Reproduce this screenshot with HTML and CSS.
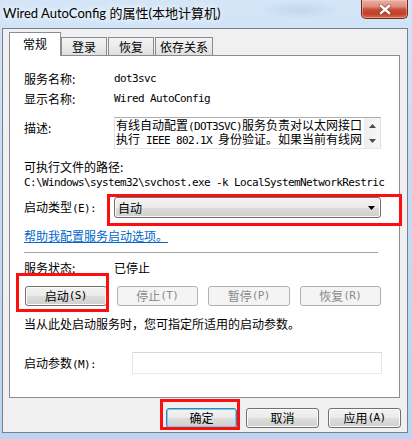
FILE: index.html
```html
<!DOCTYPE html>
<html lang="zh-CN">
<head>
<meta charset="utf-8">
<title>Wired AutoConfig 的属性(本地计算机)</title>
<link rel="stylesheet" href="styles.css">
</head>
<body>
<div class="window">
  <div class="titlebar">
    <span class="title">Wired AutoConfig 的属性(本地计算机)</span>
    <div class="close">
      <svg width="14" height="11" viewBox="0 0 14 11">
        <path d="M3 2 L11 9 M11 2 L3 9" stroke="#5b2a22" stroke-width="4.2" stroke-linecap="round" fill="none" opacity="0.5"/>
        <path d="M3 2 L11 9 M11 2 L3 9" stroke="#ffffff" stroke-width="2.4" stroke-linecap="square" fill="none"/>
      </svg>
    </div>
  </div>
  <div class="client">
    <div class="tabs">
      <div class="tab active">常规</div>
      <div class="tab w46">登录</div>
      <div class="tab w46">恢复</div>
      <div class="tab w58">依存关系</div>
    </div>
    <div class="panel">
      <div class="row r-name"><span class="label">服务名称:</span><span class="mono">dot3svc</span></div>
      <div class="row r-display"><span class="label">显示名称:</span><span class="mono">Wired AutoConfig</span></div>
      <div class="row r-desc">
        <span class="label pad">描述:</span>
        <div class="textbox">
          <div class="tb-text"><div class="tb-line">有线自动配置<span class="mono">(DOT3SVC)</span>服务负责对以太网接口</div><div class="tb-line">执行<span class="mono"> IEEE 802.1X </span>身份验证。如果当前有线网</div></div>
          <div class="vscroll">
            <svg width="7" height="4" viewBox="0 0 7 4"><path d="M3.5 0 L7 4 L0 4 Z" fill="#4a4a4a"/></svg>
            <svg width="7" height="4" viewBox="0 0 7 4"><path d="M0 0 L7 0 L3.5 4 Z" fill="#4a4a4a"/></svg>
          </div>
        </div>
      </div>
      <div class="line r-pathlabel">可执行文件的路径:</div>
      <div class="line r-path mono">C:\Windows\system32\svchost.exe -k LocalSystemNetworkRestric</div>
      <div class="row r-type">
        <span class="label">启动类型<span class="mono">(E):</span></span>
        <div class="annot combo-annot">
          <div class="combo"><span>自动</span>
            <svg width="7" height="4" viewBox="0 0 7 4"><path d="M0 0 L7 0 L3.5 4 Z" fill="#000"/></svg>
          </div>
        </div>
      </div>
      <a class="link" href="#">帮助我配置服务启动选项。</a>
      <div class="sep"></div>
      <div class="row r-status"><span class="label">服务状态:</span><span>已停止</span></div>
      <div class="svc-buttons">
        <div class="annot start-annot"><div class="btn">启动<span class="mono">(S)</span></div></div>
        <div class="btn disabled">停止<span class="mono">(T)</span></div>
        <div class="btn disabled">暂停<span class="mono">(P)</span></div>
        <div class="btn disabled">恢复<span class="mono">(R)</span></div>
      </div>
      <div class="line r-hint">当从此处启动服务时，您可指定所适用的启动参数。</div>
      <div class="r-param">
        <span class="param-label">启动参数<span class="mono">(M):</span></span>
        <div class="input"></div>
      </div>
    </div>
    <div class="actions">
      <div class="annot ok-annot"><div class="btn default w71">确定</div></div>
      <div class="btn w73">取消</div>
      <div class="btn w73">应用<span class="mono">(A)</span></div>
    </div>
  </div>
</div>
</body>
</html>
```

FILE: styles.css
```css
html, body {
  margin: 0;
  padding: 0;
}
body {
  width: 412px;
  height: 439px;
  overflow: hidden;
  font-family: "Noto Sans CJK SC", "Noto Sans", sans-serif;
  font-size: 12px;
  color: #000;
}
.window {
  width: 412px;
  height: 439px;
  background: linear-gradient(180deg, #d3e5f7 0%, #c6dcf3 40%, #bad5f1 100%);
  display: flex;
  flex-direction: column;
}
.titlebar {
  height: 28px;
  display: flex;
  justify-content: space-between;
  align-items: flex-start;
  background:
    radial-gradient(ellipse 30px 8px at 190px 12px, rgba(160,185,210,0.35), transparent),
    radial-gradient(ellipse 40px 9px at 300px 10px, rgba(160,185,210,0.3), transparent);
}
.title {
  padding: 6px 0 0 3px;
  font-family: "Lato", "Noto Sans CJK SC", sans-serif;
  font-size: 13px;
  line-height: 15px;
  color: #000;
  text-shadow: 0 0 6px #fff, 0 0 10px #fff;
}
.close {
  width: 47px;
  height: 19px;
  margin-right: 4px;
  box-sizing: border-box;
  border: 1px solid #6e2a20;
  border-top: none;
  border-radius: 0 0 5px 5px;
  background: linear-gradient(180deg, #eab0a2 0%, #dd907f 35%, #c9503a 52%, #c23f28 75%, #d5694d 100%);
  box-shadow: inset 0 0 0 1px rgba(255,210,200,0.45);
  display: flex;
  align-items: center;
  justify-content: center;
}
.client {
  margin: 0 4px 0 2px;
  height: 405px;
  box-sizing: border-box;
  border: 1px solid #76808c;
  background: #f0f0f0;
}
.tabs {
  display: flex;
  align-items: flex-end;
  padding: 3px 0 0 6px;
  height: 23px;
}
.tab {
  box-sizing: border-box;
  height: 18px;
  border: 1px solid #898c95;
  border-bottom: none;
  background: linear-gradient(180deg, #f3f3f3 0%, #ebebeb 50%, #dfdfdf 100%);
  text-align: center;
  line-height: 14px;
  padding-top: 2px;
  margin-left: 1px;
}
.tab.active {
  width: 52px;
  height: 24px;
  margin-left: 0;
  margin-bottom: -1px;
  padding-top: 4px;
  background: #fff;
  position: relative;
  z-index: 1;
}
.tab.active + .tab { margin-left: 0; }
.w46 { width: 46px; }
.w58 { width: 58px; }
.panel {
  margin: 0 7px 0 6px;
  height: 343px;
  box-sizing: border-box;
  border: 1px solid #898c95;
  background: #fff;
  padding: 16px 18px 0 14px;
}
.mono {
  font-family: "DejaVu Sans Mono", "Liberation Mono", monospace;
  font-size: 11px;
  letter-spacing: -0.62px;
}
.row {
  display: grid;
  grid-template-columns: 90px 1fr;
  align-items: center;
  line-height: 14px;
}
.line { line-height: 14px; }
.r-display { margin-top: 6px; }
.r-desc { margin-top: 11px; align-items: start; }
.label.pad { padding-top: 4px; }
.textbox {
  height: 32px;
  box-sizing: border-box;
  border: 1px solid;
  border-color: #abadb3 #dbdfe6 #e3e9ef #e2e3ea;
  display: flex;
  background: #fff;
}
.tb-text {
  flex: 1;
  padding-left: 1px;
  white-space: nowrap;
}
.tb-line {
  height: 14px;
  line-height: 14px;
}
.vscroll {
  width: 16px;
  background: linear-gradient(90deg, #eeeeee, #f7f7f7);
  display: flex;
  flex-direction: column;
  align-items: center;
  justify-content: space-around;
}
.r-pathlabel { margin-top: 11px; }
.r-path {
  margin-top: 2px;
  white-space: nowrap;
}
.r-type { margin-top: 7px; }
.annot { position: relative; }
.annot::after {
  content: "";
  position: absolute;
  border: 3px solid #fe0f0f;
  pointer-events: none;
}
.combo-annot::after { left: -7px; right: -21px; top: -3px; bottom: -8px; }
.combo {
  height: 21px;
  box-sizing: border-box;
  border: 1px solid #707070;
  border-radius: 3px;
  background: linear-gradient(180deg, #f2f2f2 0%, #ebebeb 50%, #dddddd 51%, #cfcfcf 100%);
  box-shadow: inset 0 0 0 1px #fafafa;
  display: flex;
  align-items: center;
  justify-content: space-between;
  padding: 0 5px 0 3px;
  line-height: 14px;
}
.link {
  display: block;
  margin-top: 11px;
  line-height: 14px;
  color: #0066cc;
  text-decoration: underline;
  width: max-content;
}
.sep {
  margin: 9px 3px 0 0;
  height: 1px;
  background: #a0a0a0;
}
.r-status { margin-top: 8px; }
.svc-buttons {
  margin: 11px 0 0 1px;
  display: grid;
  grid-template-columns: repeat(4, 1fr);
  gap: 10px;
}
.btn {
  height: 20px;
  box-sizing: border-box;
  border: 1px solid #707070;
  border-radius: 3px;
  background: linear-gradient(180deg, #f2f2f2 0%, #ebebeb 50%, #dddddd 51%, #cfcfcf 100%);
  box-shadow: inset 0 0 0 1px #fcfcfc;
  display: flex;
  align-items: center;
  justify-content: center;
  line-height: 14px;
}
.btn.disabled {
  border-color: #adb2b5;
  background: #f4f4f4;
  box-shadow: none;
  color: #8a8a8a;
}
.btn.default {
  border-color: #3c7fb1;
  box-shadow: inset 0 0 0 1px #6fd2f3;
}
.start-annot::after { left: -9px; right: -2px; top: -13px; bottom: -6px; }
.r-hint { margin-top: 11px; }
.r-param {
  margin-top: 21px;
  display: flex;
  align-items: center;
  line-height: 14px;
}
.param-label { width: 108px; padding-top: 2px; }
.input {
  flex: 1;
  height: 22px;
  margin-right: -1px;
  box-sizing: border-box;
  border: 1px solid;
  border-color: #d3d9e0 #e2e7ed #e7ecf1 #e2e7ed;
  background: #fff;
}
.actions {
  display: flex;
  justify-content: flex-end;
  gap: 9px;
  padding: 10px 6px 0 0;
}
.w71 { width: 71px; }
.w73 { width: 73px; }
.ok-annot::after { left: -6px; right: -3px; top: -9px; bottom: -2px; }
```
